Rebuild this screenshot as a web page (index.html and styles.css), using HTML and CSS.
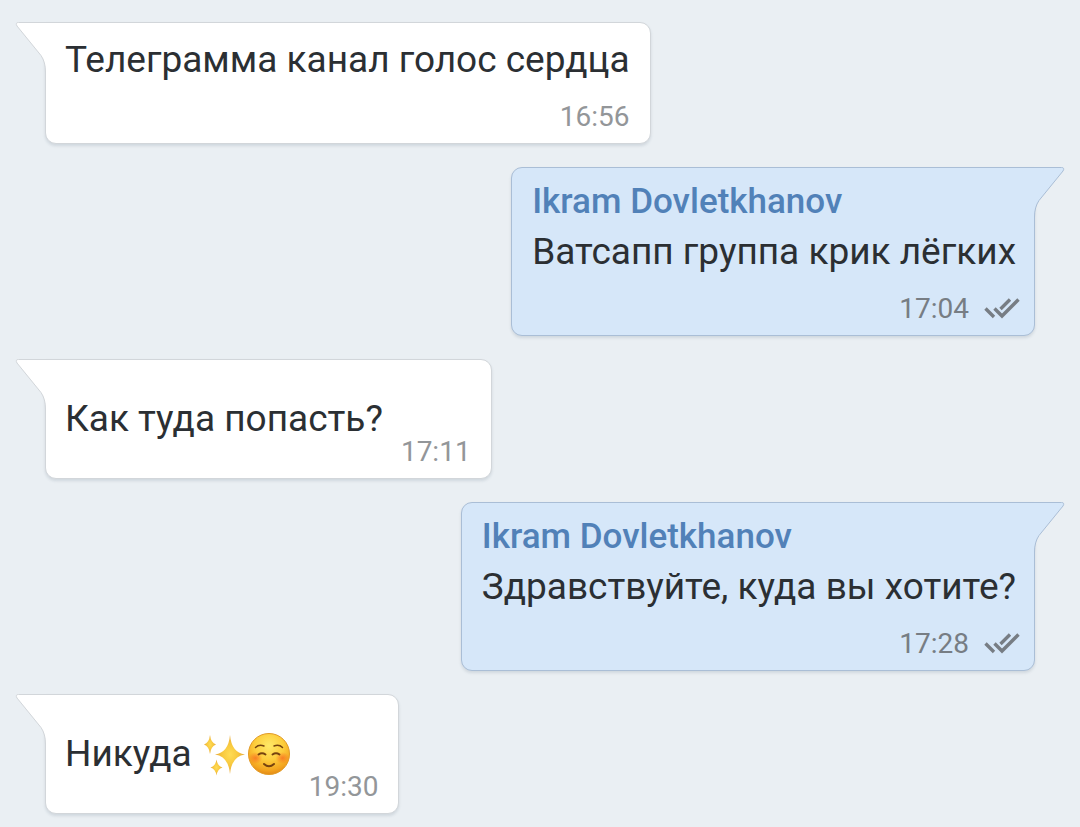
FILE: index.html
```
<!DOCTYPE html>
<html lang="ru">
<head>
<meta charset="utf-8">
<meta name="viewport" content="width=device-width, initial-scale=1">
<title>Чат</title>
<link rel="stylesheet" href="styles.css">
</head>
<body>
<svg width="0" height="0" class="defs" aria-hidden="true">
  <defs>
    <symbol id="tail" viewBox="0 0 46 56">
      <path class="tail-fill" d="M46 .5H4.500Q1 .5 3 4L27 33.500Q31.500 40 31.500 50V56H46Z"/>
      <path class="tail-line" d="M46 .5H4.500Q1 .5 3 4L27 33.500Q31.500 40 31.500 50V56"/>
    </symbol>
    <symbol id="checks" viewBox="0 0 36 22">
      <path d="M1.500 10.500L10 19M10.500 10.500L18 18L34.500 1.500M16.500 11L26 1.500" fill="none" stroke="currentColor" stroke-width="3.400"/>
    </symbol>
  </defs>
</svg>
<main class="chat">
  <article class="message incoming">
    <svg class="tail" aria-hidden="true"><use href="#tail"/></svg>
    <p class="text">Телеграмма канал голос сердца</p>
    <div class="meta"><time>16:56</time></div>
  </article>

  <article class="message outgoing">
    <svg class="tail" aria-hidden="true"><use href="#tail"/></svg>
    <h2 class="author">Ikram Dovletkhanov</h2>
    <p class="text">Ватсапп группа крик лёгких</p>
    <div class="meta"><time>17:04</time><svg class="checks" role="img" aria-label="Прочитано"><use href="#checks"/></svg></div>
  </article>

  <article class="message incoming short">
    <svg class="tail" aria-hidden="true"><use href="#tail"/></svg>
    <p class="text">Как туда попасть?</p>
    <div class="meta"><time>17:11</time></div>
  </article>

  <article class="message outgoing">
    <svg class="tail" aria-hidden="true"><use href="#tail"/></svg>
    <h2 class="author">Ikram Dovletkhanov</h2>
    <p class="text">Здравствуйте, куда вы хотите?</p>
    <div class="meta"><time>17:28</time><svg class="checks" role="img" aria-label="Прочитано"><use href="#checks"/></svg></div>
  </article>

  <article class="message incoming short">
    <svg class="tail" aria-hidden="true"><use href="#tail"/></svg>
    <p class="text with-emoji">Никуда
      <span class="emojis">
        <svg class="emoji" viewBox="0 0 44 44" role="img" aria-label="Блёстки">
          <defs>
            <radialGradient id="gold"><stop offset="0" stop-color="#ffdc55"/><stop offset=".5" stop-color="#f8c93f"/><stop offset="1" stop-color="#e6a83c"/></radialGradient>
          </defs>
          <g fill="url(#gold)">
            <path d="M27 3Q28.500 20.500 42 22.500Q28.500 24.500 27 42Q25.500 24.500 12 22.500Q25.500 20.500 27 3Z"/>
            <path d="M7 3Q8 11 13 12.500Q8 14 7 22Q6 14 1 12.500Q6 11 7 3Z"/>
            <path d="M13.500 27.500Q14.500 34 19.500 35.500Q14.500 37 13.500 43.500Q12.500 37 7.500 35.500Q12.500 34 13.500 27.500Z"/>
          </g>
        </svg>
        <svg class="emoji" viewBox="0 0 44 44" role="img" aria-label="Улыбка">
          <defs>
            <radialGradient id="face" cx=".5" cy=".3" r=".7"><stop offset="0" stop-color="#ffe968"/><stop offset=".5" stop-color="#fdcd3c"/><stop offset=".85" stop-color="#f3a51f"/><stop offset="1" stop-color="#e48a16"/></radialGradient>
            <radialGradient id="blush"><stop offset="0" stop-color="#fa6a20" stop-opacity=".75"/><stop offset="1" stop-color="#fa6a20" stop-opacity="0"/></radialGradient>
          </defs>
          <circle cx="22" cy="22" r="20.500" fill="url(#face)" stroke="#e29a24"/>
          <ellipse cx="8.500" cy="26" rx="7" ry="6" fill="url(#blush)"/>
          <ellipse cx="35.500" cy="26" rx="7" ry="6" fill="url(#blush)"/>
          <g fill="none" stroke="#76430f" stroke-linecap="round">
            <path d="M8.500 15.500Q12 12 17 14M27 14Q32 12 35.500 15.500" stroke-width="1.500"/>
            <path d="M11.500 22.500Q15 20 18.500 22.500M25.500 22.500Q29 20 32.500 22.500" stroke-width="2"/>
            <path d="M17 32Q22 36.500 27 32" stroke-width="2"/>
          </g>
        </svg>
      </span>
    </p>
    <div class="meta"><time>19:30</time></div>
  </article>
</main>
</body>
</html>
```
FILE: styles.css
```
* {
  box-sizing: border-box;
}

body {
  margin: 0;
  background: #eaeff3;
  color: #2b2f33;
  font-family: Roboto, "Noto Sans", sans-serif;
}

.defs {
  position: absolute;
}

.chat {
  display: flex;
  flex-direction: column;
  gap: 23px;
  padding: 22px 45px 13px;
}

.message {
  --fill: #fff;
  --line: #d2d6da;
  position: relative;
  max-width: 90%;
  padding: 12px 20px 10px 19px;
  background: var(--fill);
  border: 1px solid var(--line);
  border-radius: 11px;
  box-shadow: 0 2px 3px rgba(60, 80, 100, 0.14);
}

.incoming {
  align-self: flex-start;
  border-top-left-radius: 0;
}

.outgoing {
  --fill: #d6e7f9;
  --line: #aabed6;
  align-self: flex-end;
  padding: 9px 18px 10px 20px;
  border-top-right-radius: 0;
}

.tail {
  position: absolute;
  top: -1px;
  left: -32px;
  width: 46px;
  height: 56px;
}

.outgoing .tail {
  left: auto;
  right: -32px;
  transform: scaleX(-1);
}

.tail-fill {
  fill: var(--fill);
}

.tail-line {
  fill: none;
  stroke: var(--line);
}

.author,
.text {
  position: relative;
  margin: 0;
  line-height: 50px;
}

.author {
  color: #5181b8;
  font-size: 35px;
  font-weight: 500;
}

.text {
  font-size: 37px;
}

.meta {
  display: flex;
  justify-content: flex-end;
  align-items: center;
  gap: 15px;
  padding-top: 16px;
  color: #939699;
  font-size: 28px;
  line-height: 32px;
}

.outgoing .meta {
  margin-right: -4px;
  color: #777d84;
}

.checks {
  width: 36px;
  height: 22px;
}

.short {
  display: flex;
  align-items: flex-end;
  gap: 18px;
  padding-top: 34px;
}

.short .text {
  padding-bottom: 24px;
}

.with-emoji {
  display: flex;
  align-items: center;
  gap: 11px;
}

.emojis {
  display: flex;
}

.emoji {
  width: 44px;
  height: 44px;
}
```
